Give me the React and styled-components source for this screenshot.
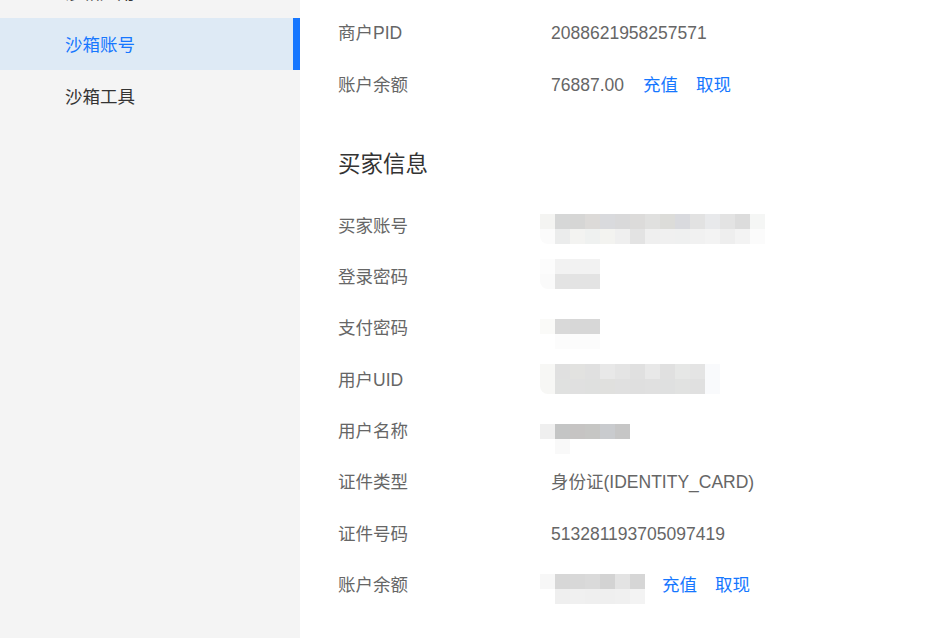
import { useLayoutEffect, useRef } from 'react';
import styled, { createGlobalStyle } from 'styled-components';

const GlobalStyle = createGlobalStyle`
    html, body {
        margin: 0;
        padding: 0;
        background: #ffffff;
        font-family: "Liberation Sans", "Noto Sans CJK SC", sans-serif;
    }
`;

// blurred values, each block: 2 rows of 15px cells
const masks = {
    sellerAccount: {
        shift: 6,
        top: ['#f4f4f2', '#d6d7d7', '#d6d6d5', '#dcdad8', '#d9dadd', '#d9d9da', '#dcdbda', '#e0e0df', '#dcdcd9', '#d9dade', '#e2e2e2', '#e8e9eb', '#e3e3e3', '#dcdcdc', '#f5f6f5'],
        bottom: ['#fbfbfb', '#ebecec', '#f3f3f1', '#eff1f0', '#f3f3f0', '#efefef', '#e3e3e3', '#efefef', '#f0f0f0', '#eff0f0', '#f1f1f1', '#f3f3f3', '#eeeeee', '#f3f3f3', '#fbfbfb'],
    },
    buyerAccount: {
        shift: 6,
        top: ['#f4f4f2', '#d6d7d7', '#d6d6d5', '#dcdad8', '#d9dadd', '#d9d9da', '#dcdbda', '#e0e0df', '#dcdcd9', '#d9dade', '#e2e2e2', '#e8e9eb', '#e3e3e3', '#dcdcdc', '#f5f6f5'],
        bottom: ['#fbfbfb', '#ebecec', '#f3f3f1', '#eff1f0', '#f3f3f0', '#efefef', '#e3e3e3', '#efefef', '#f0f0f0', '#eff0f0', '#f1f1f1', '#f3f3f3', '#eeeeee', '#f3f3f3', '#fbfbfb'],
    },
    loginPwd: {
        shift: -6,
        top: ['#fcfcfc', '#f2f2f2', '#f2f2f2', '#f2f2f2'],
        bottom: ['#fafafa', '#e3e3e3', '#e3e3e3', '#e3e3e3'],
    },
    payPwd: {
        shift: 12,
        top: ['#fafaf8', '#d9d9d9', '#d7d7d7', '#d7d7d7'],
        bottom: ['#ffffff', '#fcfcfc', '#fcfcfc', '#fcfcfc'],
    },
    uid: {
        shift: -2,
        top: ['#f7f7f5', '#e0e0e0', '#e2e2e0', '#e0e0e0', '#e8e8e8', '#e4e4e4', '#e0e0e0', '#e8e8e8', '#e0e0e0', '#e6e7e6', '#e4e4e4', '#f9fafc'],
        bottom: ['#f7f7f5', '#e0e1e0', '#e0e0e0', '#dfe0df', '#e0e0de', '#e0e0e0', '#dfdfdf', '#e0e0e0', '#dfe0e0', '#e1e2e1', '#e0e0e0', '#f9fafc'],
    },
    userName: {
        shift: 16,
        top: ['#efefef', '#c4c5c5', '#c6c4c3', '#c6c6c4', '#c9cbce', '#c6c6c6'],
        bottom: ['#ffffff', '#f9f9f9', '#ffffff', '#ffffff', '#ffffff', '#ffffff'],
    },
    balance: {
        shift: 8,
        top: ['#f7f7f7', '#d7d7d7', '#d8d8d8', '#dadada', '#d3d3d3', '#e3e3e3', '#d6d6d6'],
        bottom: ['#ffffff', '#efefef', '#f0f0f0', '#efefef', '#efefef', '#f0f0f0', '#f3f3f3'],
    },
};

const Mosaic = ({ mask }) => (
    <MaskGrid $cols={mask.top.length} $shift={mask.shift}>
        {mask.top.concat(mask.bottom).map((c, i) => (
            <MaskCell key={i} style={{ background: c }} />
        ))}
    </MaskGrid>
);

const Actions = () => (
    <>
        <Link>充值</Link>
        <Link>取现</Link>
    </>
);

const sellerRows = [
    { label: '商家账号', mask: masks.sellerAccount },
    { label: '登录密码', mask: masks.loginPwd },
    { label: '商户PID', text: '2088621958257571' },
    { label: '账户余额', text: '76887.00', actions: true },
];

const buyerRows = [
    { label: '买家账号', mask: masks.buyerAccount },
    { label: '登录密码', mask: masks.loginPwd },
    { label: '支付密码', mask: masks.payPwd },
    { label: '用户UID', mask: masks.uid },
    { label: '用户名称', mask: masks.userName },
    { label: '证件类型', text: '身份证(IDENTITY_CARD)' },
    { label: '证件号码', text: '513281193705097419' },
    { label: '账户余额', mask: masks.balance, actions: true },
];

const menu = ['沙箱应用', '沙箱账号', '沙箱工具'];

const InfoRows = ({ rows }) =>
    rows.map((r, i) => (
        <Row key={i}>
            <Label>{r.label}</Label>
            <Value>
                {r.mask ? <Mosaic mask={r.mask} /> : <span>{r.text}</span>}
                {r.actions && <Actions />}
            </Value>
        </Row>
    ));

const App = () => {
    const pageRef = useRef(null);

    // the screenshot shows the page scrolled down a bit
    useLayoutEffect(() => {
        if (pageRef.current) pageRef.current.scrollTop = 185;
    }, []);

    return (
        <>
            <GlobalStyle />
            <Page ref={pageRef}>
                <Layout>
                    <Sidebar>
                        {menu.map((m) => (
                            <MenuItem key={m} $active={m === '沙箱账号'}>{m}</MenuItem>
                        ))}
                    </Sidebar>
                    <Main>
                        <Heading>商家信息</Heading>
                        <InfoRows rows={sellerRows} />
                        <Heading>买家信息</Heading>
                        <InfoRows rows={buyerRows} />
                    </Main>
                </Layout>
            </Page>
        </>
    );
};

export default App;

const Page = styled.div`
    height: 100vh;
    overflow-y: auto;
    scrollbar-width: none;

    &::-webkit-scrollbar {
        display: none;
    }
`;

const Layout = styled.div`
    display: flex;
    flex-direction: row;
    min-height: 100%;
`;

const Sidebar = styled.nav`
    width: 300px;
    flex-shrink: 0;
    background: #f4f4f4;
    padding-top: 151px;
    display: flex;
    flex-direction: column;
`;

const MenuItem = styled.div`
    height: 52px;
    line-height: 54px;
    padding-left: 65px;
    font-size: 17.5px;
    color: ${(p) => (p.$active ? '#1677ff' : '#333333')};
    background: ${(p) => (p.$active ? '#deeaf5' : 'transparent')};
    border-right: 7px solid ${(p) => (p.$active ? '#1677ff' : 'transparent')};
`;

const Main = styled.main`
    flex: 1;
    padding: 0 0 40px 38px;
`;

const Heading = styled.h3`
    margin: 39px 0 19px;
    font-size: 22.5px;
    font-weight: normal;
    line-height: 32px;
    color: #333333;
`;

const Row = styled.div`
    display: flex;
    align-items: center;
    height: 51.3px;
    font-size: 17.5px;
    line-height: 24px;
    color: #666666;
`;

const Label = styled.div`
    width: 213px;
    flex-shrink: 0;
`;

const Value = styled.div`
    display: flex;
    align-items: center;
`;

const Link = styled.a`
    margin-left: 18px;
    color: #1677ff;
    cursor: pointer;

    &:first-of-type {
        margin-left: 19px;
    }
`;

const MaskGrid = styled.div`
    display: grid;
    grid-template-columns: repeat(${(p) => p.$cols}, 15px);
    grid-auto-rows: 15px;
    margin-left: -11px;
    margin-right: -2px;
    margin-top: ${(p) => p.$shift}px;
    border-bottom-left-radius: 8px;
    overflow: hidden;
`;

const MaskCell = styled.div``;
